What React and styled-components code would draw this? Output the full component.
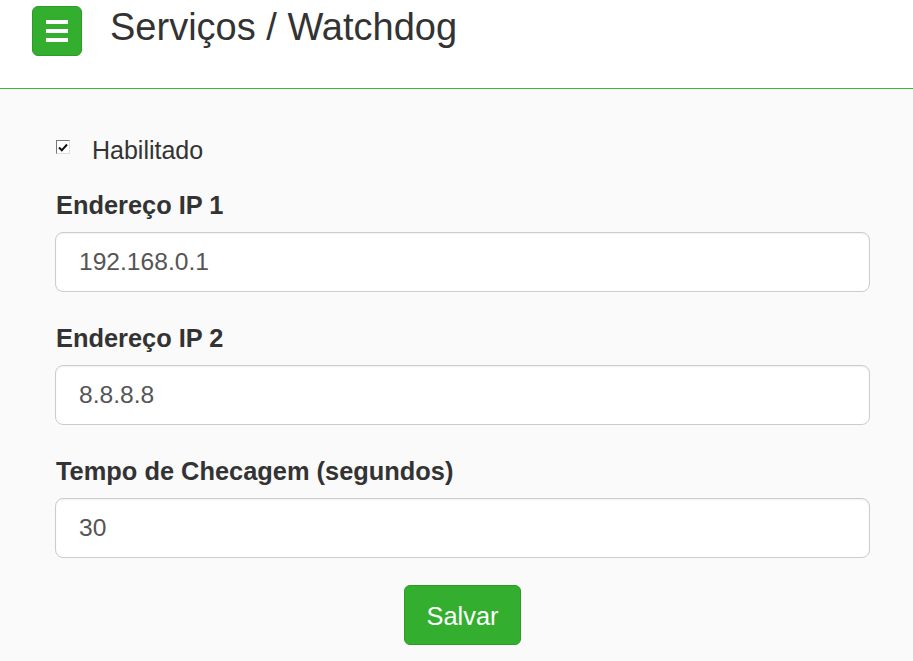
import React from "react";
import styled, { createGlobalStyle } from "styled-components";

const Global = createGlobalStyle`
  html, body { margin: 0; padding: 0; }
  body {
    font-family: "Liberation Sans", Arial, sans-serif;
    background: #fafafa;
    color: #333;
  }
`;

const Header = styled.header`
  background: #fff;
  border-bottom: 1px solid #3cb43a;
  display: flex;
  align-items: flex-start;
  padding: 6px 0 0 32px;
  box-sizing: border-box;
  height: 89px;
`;

const MenuButton = styled.button`
  width: 50px;
  height: 50px;
  box-sizing: border-box;
  background: #33ae2f;
  border: 1px solid #2c9c29;
  border-radius: 6px;
  display: flex;
  flex-direction: column;
  align-items: center;
  justify-content: center;
  gap: 5px;
  padding: 0;
`;

const Bar = styled.span`
  display: block;
  width: 22px;
  height: 4px;
  background: #fff;
`;

const Title = styled.h1`
  margin: 0 0 0 28px;
  font-size: 38px;
  font-weight: 400;
  line-height: 38px;
  color: #333;
  padding-top: 2px;
`;

const Main = styled.main`
  padding: 44px 43px 0 55px;
  display: flex;
  flex-direction: column;
`;

const CheckRow = styled.label`
  display: flex;
  align-items: center;
  font-size: 25px;
  line-height: 34px;
  height: 34px;
  margin-bottom: 21px;
`;

const CheckBox = styled.span`
  width: 14px;
  height: 14px;
  box-sizing: border-box;
  margin: -6px 22px 0 1px;
  background: #fff;
  border: 1px solid;
  border-color: #777 #ddd #ddd #777;
  display: flex;
  align-items: center;
  justify-content: center;
`;

const FieldLabel = styled.div`
  font-size: 25.4px;
  font-weight: 700;
  line-height: 34px;
  padding-left: 1px;
  margin-bottom: 10px;
`;

const Input = styled.input`
  box-sizing: border-box;
  width: 100%;
  height: 60px;
  border: 1px solid #ccc;
  border-radius: 8px;
  background: #fff;
  box-shadow: inset 0 1px 2px rgba(0, 0, 0, 0.06);
  padding: 0 23px;
  font-family: "Liberation Sans", Arial, sans-serif;
  font-size: 24.6px;
  color: #555;
  margin-bottom: ${(p) => p.$mb}px;
  outline: none;
`;

const SaveButton = styled.button`
  align-self: center;
  width: 117px;
  height: 60px;
  background: #33ae2f;
  border: 1px solid #2c9c29;
  border-radius: 6px;
  color: #fff;
  font-family: "Liberation Sans", Arial, sans-serif;
  font-size: 25.4px;
  padding: 2px 0 0;
`;

export default function App() {
  return (
    <>
      <Global />
      <Header>
        <MenuButton aria-label="menu">
          <Bar />
          <Bar />
          <Bar />
        </MenuButton>
        <Title>Serviços / Watchdog</Title>
      </Header>
      <Main>
        <CheckRow>
          <CheckBox>
            <svg width="10" height="9" viewBox="0 0 10 9">
              <path d="M1 4.5 L3.8 7.3 L9 1.5" fill="none" stroke="#111" strokeWidth="2" />
            </svg>
          </CheckBox>
          Habilitado
        </CheckRow>
        <FieldLabel>Endereço IP 1</FieldLabel>
        <Input defaultValue="192.168.0.1" $mb={29} />
        <FieldLabel>Endereço IP 2</FieldLabel>
        <Input defaultValue="8.8.8.8" $mb={29} />
        <FieldLabel>Tempo de Checagem (segundos)</FieldLabel>
        <Input defaultValue="30" $mb={27} />
        <SaveButton>Salvar</SaveButton>
      </Main>
    </>
  );
}
